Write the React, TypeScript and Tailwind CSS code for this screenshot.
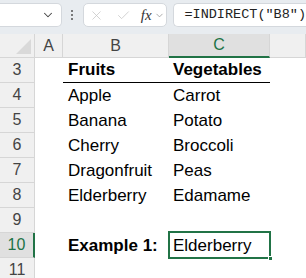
import { ChevronDown, X, Check } from 'lucide-react'

const cols = [
  { key: 'A', w: 'w-[28px]' },
  { key: 'B', w: 'w-[106px]' },
  { key: 'C', w: 'w-[101px]' },
  { key: 'D', w: 'flex-1' },
]

const rows: { n: number; b?: string; c?: string; bold?: boolean }[] = [
  { n: 3, b: 'Fruits', c: 'Vegetables', bold: true },
  { n: 4, b: 'Apple', c: 'Carrot' },
  { n: 5, b: 'Banana', c: 'Potato' },
  { n: 6, b: 'Cherry', c: 'Broccoli' },
  { n: 7, b: 'Dragonfruit', c: 'Peas' },
  { n: 8, b: 'Elderberry', c: 'Edamame' },
  { n: 9 },
  { n: 10, b: 'Example 1:', c: 'Elderberry' },
  { n: 11 },
]

function Toolbar() {
  return (
    <div className="h-[34px] bg-[#e8ecf0] flex items-start pt-[3px] gap-0">
      {/* name box */}
      <div className="w-[62px] h-[24px] bg-white rounded-r-[5px] border border-l-0 border-[#d4d8dd] flex items-center justify-end pr-[6px]">
        <ChevronDown size={14} strokeWidth={1.8} className="text-[#444]" />
      </div>
      <div className="w-[21px] h-[24px] flex flex-col items-center justify-center gap-[2px]">
        <span className="w-[2px] h-[2px] bg-[#555] rounded-full" />
        <span className="w-[2px] h-[2px] bg-[#555] rounded-full" />
        <span className="w-[2px] h-[2px] bg-[#555] rounded-full" />
      </div>
      {/* formula buttons */}
      <div className="w-[85px] h-[24px] bg-white rounded-[5px] border border-[#d4d8dd] flex items-center pl-[5px]">
        <X size={15} strokeWidth={1.2} className="text-[#c4c4c4]" />
        <Check size={15} strokeWidth={1.2} className="text-[#c4c4c4] ml-[12px]" />
        <span
          className="ml-[10px] text-[15px] leading-none italic text-[#333]"
          style={{ fontFamily: '"Liberation Serif", serif' }}
        >
          fx
        </span>
        <ChevronDown size={11} strokeWidth={1.5} className="text-[#888] ml-[2px]" />
      </div>
      {/* formula input */}
      <div className="ml-[6px] flex-1 h-[24px] bg-white rounded-l-[5px] border border-r-0 border-[#d4d8dd] flex items-center pl-[10px]">
        <span
          className="text-[13.5px] text-[#222] whitespace-nowrap"
          style={{ fontFamily: '"Liberation Mono", monospace' }}
        >
          =INDIRECT("B8")
        </span>
      </div>
    </div>
  )
}

export default function App() {
  return (
    <div
      className="w-[306px] h-[278px] overflow-hidden bg-white text-black"
      style={{ fontFamily: '"Liberation Sans", Arial, sans-serif' }}
    >
      <Toolbar />
      {/* column header row */}
      <div className="flex h-[24px] bg-[#f0f0f0] border-b border-[#d6d6d6]">
        <div className="w-[35px] relative border-r border-[#d6d6d6]">
          <div className="absolute right-[3px] bottom-[3px] w-0 h-0 border-l-[15px] border-l-transparent border-b-[15px] border-b-[#d9d9d9]" />
        </div>
        {cols.map((c) => (
          <div
            key={c.key}
            className={`${c.w} flex items-center justify-center text-[16px] border-r border-[#d6d6d6] ${
              c.key === 'C' ? 'bg-[#e0e0e0] text-[#217346] border-b-2 border-b-[#217346] -mb-px' : 'text-[#444]'
            }`}
          >
            {c.key === 'D' ? '' : c.key}
          </div>
        ))}
      </div>
      {rows.map((r) => {
        const active = r.n === 10
        return (
          <div key={r.n} className="flex h-[25px]">
            <div
              className={`w-[35px] flex items-center justify-center text-[16px] border-b border-[#d6d6d6] ${
                active
                  ? 'bg-[#e0e0e0] text-[#217346] border-r-2 border-r-[#217346]'
                  : 'bg-[#f0f0f0] text-[#444] border-r border-r-[#d6d6d6]'
              }`}
            >
              {r.n}
            </div>
            <div className="w-[28px]" />
            <div
              className={`w-[106px] flex items-center pl-[5px] text-[17px] whitespace-nowrap ${
                r.bold ? 'font-bold border-b-[1.5px] border-black' : ''
              } ${active ? 'font-bold' : ''}`}
            >
              {r.b}
            </div>
            <div
              className={`w-[101px] relative flex items-center pl-[4px] text-[17px] whitespace-nowrap ${
                r.bold ? 'font-bold border-b-[1.5px] border-black' : ''
              }`}
            >
              {active && (
                <>
                  <div className="absolute -left-px -top-[2px] -right-px -bottom-px border-2 border-[#217346]" />
                  <div className="absolute -right-[3px] -bottom-[3px] w-[5px] h-[5px] bg-[#217346] border border-white" />
                </>
              )}
              {r.c}
            </div>
            <div className="flex-1" />
          </div>
        )
      })}
    </div>
  )
}
